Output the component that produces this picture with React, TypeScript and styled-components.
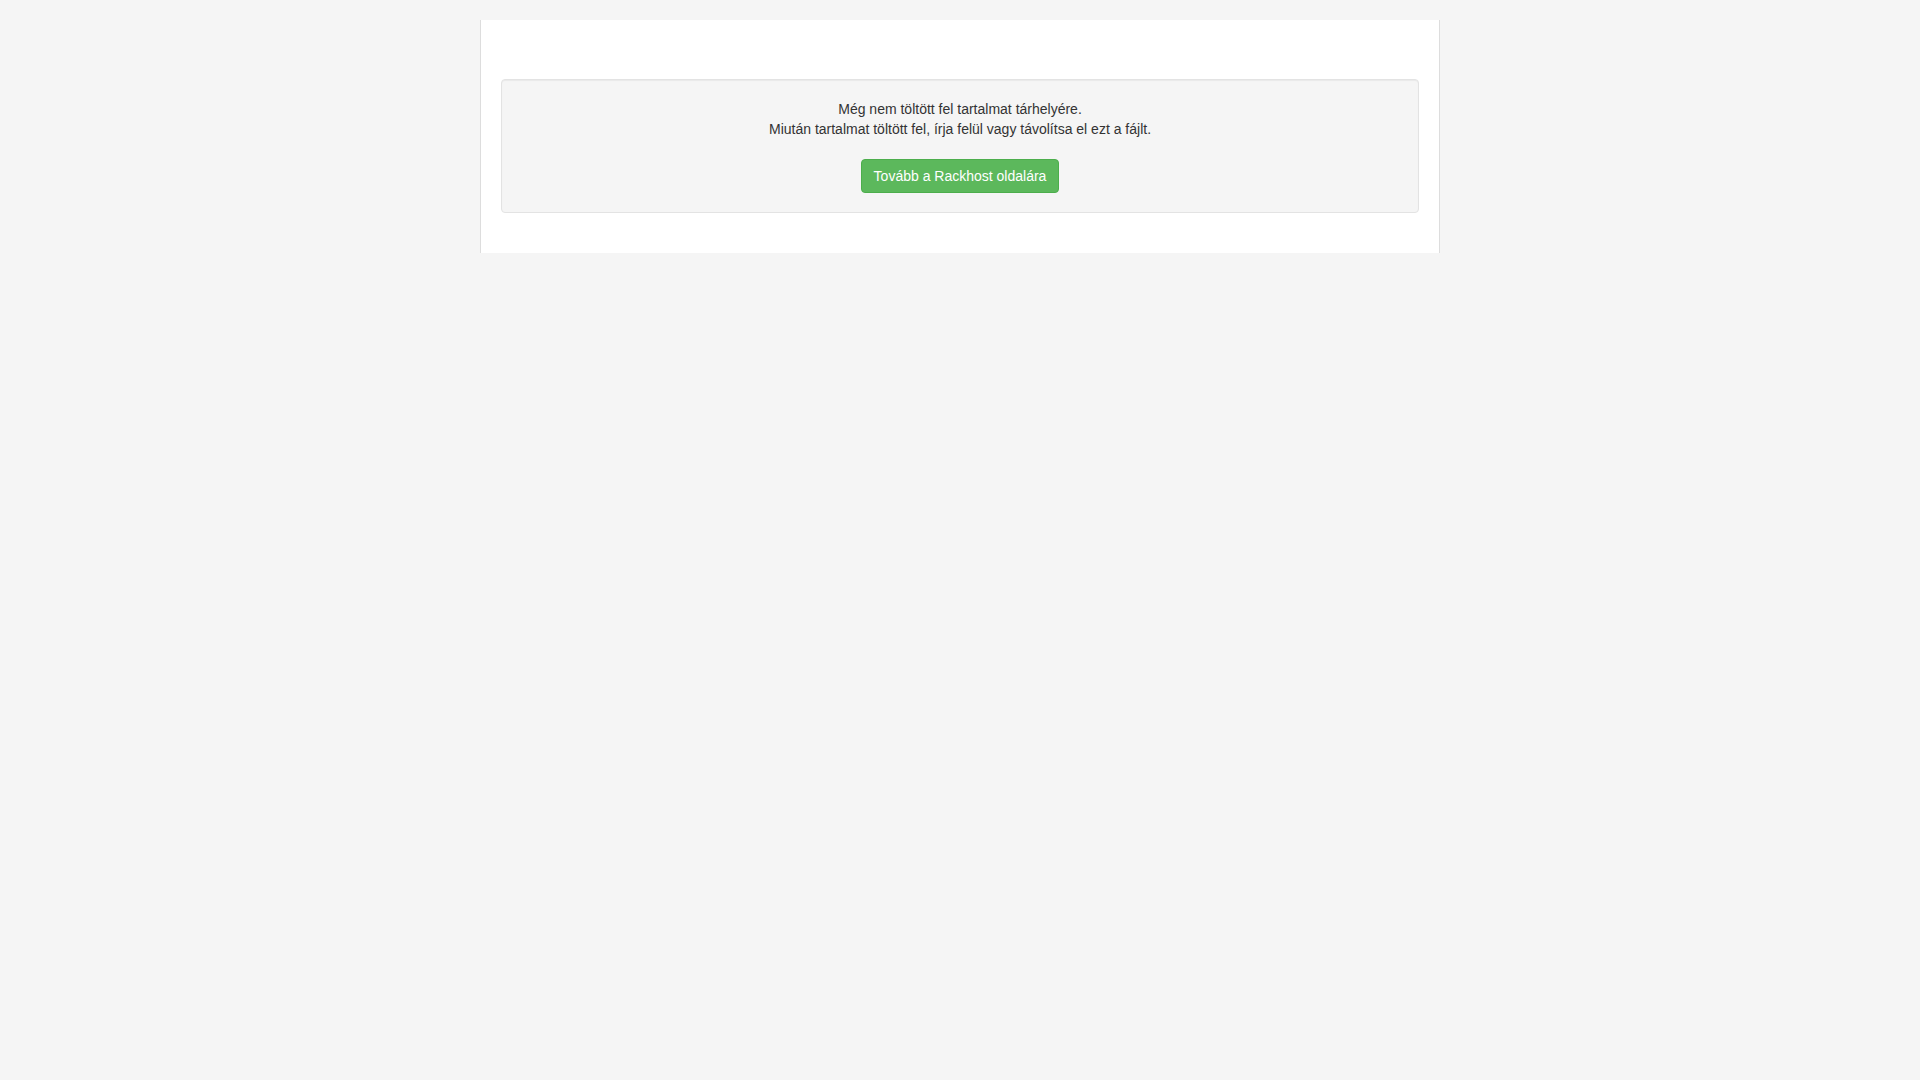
import styled, { createGlobalStyle } from 'styled-components';

const GlobalStyle = createGlobalStyle`
  *, *::before, *::after {
    box-sizing: border-box;
  }

  body {
    margin: 0;
    padding: 20px 0;
    background: #f5f5f5;
    color: #333;
    font-family: "Liberation Sans", Helvetica, Arial, sans-serif;
    font-size: 14px;
    line-height: 20px;
  }
`;

const Page = styled.main`
  width: 100%;
  max-width: 960px;
  margin: 0 auto;
  padding: 59px 20px 40px;
  background: #fff;
  border: solid #ddd;
  border-width: 0 1px;
`;

const Well = styled.section`
  display: flex;
  flex-direction: column;
  align-items: center;
  gap: 20px;
  padding: 19px;
  text-align: center;
  background: #f5f5f5;
  border: 1px solid #e3e3e3;
  border-radius: 4px;
  box-shadow: inset 0 1px 1px rgba(0, 0, 0, 0.05);
`;

const Message = styled.p`
  margin: 0;
`;

const ButtonLink = styled.a`
  padding: 6px 12px;
  color: #fff;
  text-decoration: none;
  white-space: nowrap;
  background: #5cb85c;
  border: 1px solid #4cae4c;
  border-radius: 4px;

  &:hover,
  &:focus {
    background: #449d44;
    border-color: #398439;
  }
`;

export default function App() {
  return (
    <>
      <GlobalStyle />
      <Page>
        <Well>
          <Message>
            Még nem töltött fel tartalmat tárhelyére.
            <br />
            Miután tartalmat töltött fel, írja felül vagy távolítsa el ezt a fájlt.
          </Message>
          <ButtonLink href="https://www.rackhost.hu">Tovább a Rackhost oldalára</ButtonLink>
        </Well>
      </Page>
    </>
  );
}
